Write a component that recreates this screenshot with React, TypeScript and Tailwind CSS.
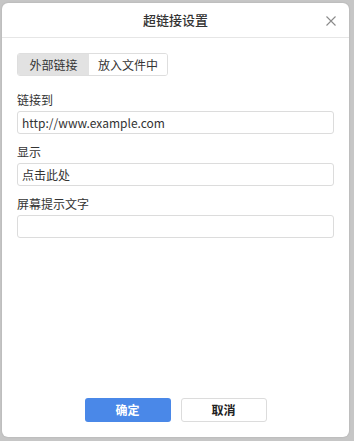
const font = { fontFamily: '"Noto Sans CJK SC", "Liberation Sans", sans-serif' };

function Field({ label, value }: { label: string; value?: string }) {
  return (
    <div className="flex flex-col">
      <label className="text-[12px] leading-[16px] text-[#333] mb-[3px]">{label}</label>
      <input
        readOnly
        value={value ?? ""}
        className="h-[23px] w-full rounded-[3px] border border-[#dcdcdc] px-[4px] text-[12px] text-[#333] outline-none"
        style={font}
      />
    </div>
  );
}

export default function App() {
  return (
    <div
      className="w-[354px] h-[441px] bg-[#c6c6c6] pt-[3px] pl-[2px] pr-[5px] pb-[4px]"
      style={font}
    >
      <div className="flex h-full flex-col rounded-[6px] bg-white shadow-[0_0_2px_rgba(0,0,0,0.15)]">
        {/* header */}
        <div className="relative flex h-[35px] shrink-0 items-center justify-center border-b border-[#e6e6e6]">
          <span className="text-[13px] font-medium text-[#333]">超链接设置</span>
          <svg
            className="absolute right-[13px] top-[13px] h-[10px] w-[10px]"
            viewBox="0 0 10 10"
            stroke="#8a8a8a"
            strokeWidth="1.1"
          >
            <path d="M0.5 0.5L9.5 9.5M9.5 0.5L0.5 9.5" />
          </svg>
        </div>

        {/* body */}
        <div className="flex flex-1 flex-col px-[15px] pt-[15px]">
          <div className="flex h-[23px] w-[151px] overflow-hidden rounded-[3px] border border-[#dedede] text-[12px] text-[#333]">
            <div className="flex w-[71px] items-center justify-center bg-[#e2e2e2]">外部链接</div>
            <div className="flex flex-1 items-center justify-center bg-white">放入文件中</div>
          </div>

          <div className="mt-[16px] flex flex-col gap-[10px]">
            <Field label="链接到" value="http://www.example.com" />
            <Field label="显示" value="点击此处" />
            <Field label="屏幕提示文字" />
          </div>

          <div className="flex-1" />

          <div className="flex justify-center gap-[10px] pb-[15px]">
            <button className="h-[24px] w-[86px] rounded-[3px] bg-[#4a88e8] text-[12px] font-bold text-white">
              确定
            </button>
            <button className="h-[24px] w-[86px] rounded-[3px] border border-[#dcdcdc] bg-white text-[12px] font-bold text-[#222]">
              取消
            </button>
          </div>
        </div>
      </div>
    </div>
  );
}
